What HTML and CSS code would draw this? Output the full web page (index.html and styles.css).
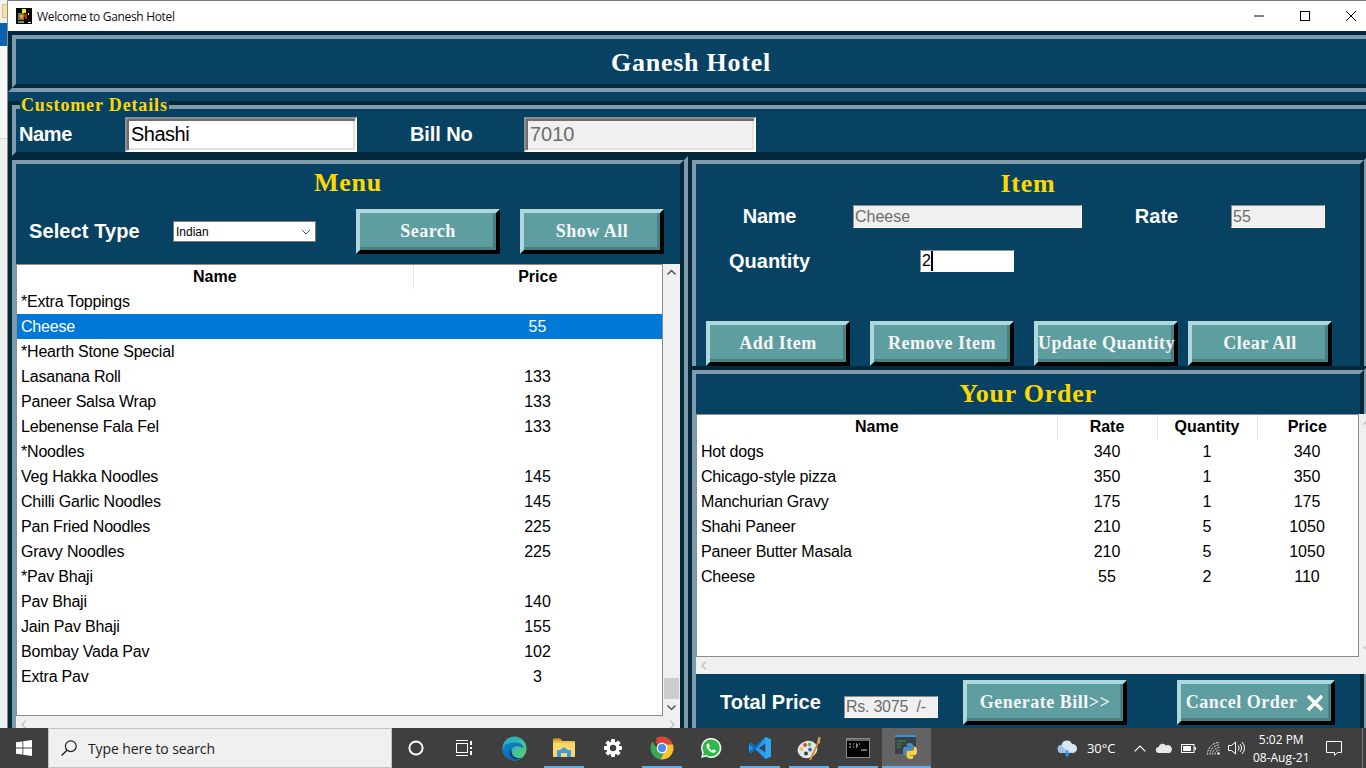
FILE: index.html
```html
<!DOCTYPE html>
<html lang="en">
<head>
  <meta charset="UTF-8">
  <title>Welcome to Ganesh Hotel</title>
  <link rel="stylesheet" href="styles.css">
</head>
<body>
  <div class="screen">
    <div class="desk">
      <div class="behind">
        <div class="behind-top"><span class="behind-tab"></span></div>
        <div class="behind-blue"></div>
        <div class="behind-mid"></div>
        <div class="behind-rest"></div>
      </div>

      <div class="window">
        <div class="titlebar">
          <svg class="app-icon" width="16" height="16" viewBox="0 0 16 16">
            <rect width="16" height="16" fill="#000"/>
            <rect x="6" y="1" width="4" height="4" fill="#ffe61a"/>
            <rect x="2" y="5" width="6" height="7" fill="#7d7a2a"/>
            <rect x="4" y="7" width="3" height="3" fill="#c9b63a"/>
            <rect x="8" y="6" width="3" height="3" fill="#d11a1a"/>
            <rect x="12" y="5" width="1" height="2" fill="#e8e8e8"/>
            <rect x="9" y="9" width="2" height="2" fill="#d11a1a"/>
            <rect x="2" y="13" width="6" height="2" fill="#8a8a50"/>
            <rect x="12" y="14" width="3" height="1" fill="#e8e8e8"/>
          </svg>
          <span class="title-text">Welcome to Ganesh Hotel</span>
          <div class="win-controls">
            <svg width="46" height="30" viewBox="0 0 46 30"><path d="M18 15h10" stroke="#000" fill="none"/></svg>
            <svg width="46" height="30" viewBox="0 0 46 30"><rect x="18.5" y="10.5" width="9" height="9" stroke="#000" fill="none"/></svg>
            <svg width="46" height="30" viewBox="0 0 46 30"><path d="M18 10l10 10M28 10l-10 10" stroke="#000" fill="none"/></svg>
          </div>
        </div>

        <div class="app">
          <header class="frame frame-head">
            <div class="frame-in">
              <h1 class="app-title">Ganesh Hotel</h1>
            </div>
          </header>

          <section class="frame frame-customer">
            <span class="legend">Customer Details</span>
            <div class="frame-in customer-row">
              <label class="label name-label">Name</label>
              <input class="entry-big name-entry" type="text" value="Shashi">
              <label class="label bill-label">Bill No</label>
              <input class="entry-big entry-off" type="text" value="7010" disabled>
            </div>
          </section>

          <div class="columns">
            <section class="frame frame-menu">
              <div class="frame-in">
                <h2 class="panel-title">Menu</h2>
                <div class="menu-tools">
                  <label class="label type-label">Select Type</label>
                  <div class="select-box"><span>Indian</span>
                    <svg width="10" height="6" viewBox="0 0 10 6"><path d="M1 1l4 4 4-4" stroke="#555" fill="none"/></svg>
                  </div>
                  <button class="btn search-btn">Search</button>
                  <button class="btn">Show All</button>
                </div>

                <div class="tree-wrap">
                  <div class="tree menu-tree">
                    <table>
                      <colgroup><col class="c-item"><col class="c-price"></colgroup>
                      <tr><th>Name</th><th>Price</th></tr>
                      <tr><td>*Extra Toppings</td><td></td></tr>
                      <tr class="selected"><td>Cheese</td><td>55</td></tr>
                      <tr><td>*Hearth Stone Special</td><td></td></tr>
                      <tr><td>Lasanana Roll</td><td>133</td></tr>
                      <tr><td>Paneer Salsa Wrap</td><td>133</td></tr>
                      <tr><td>Lebenense Fala Fel</td><td>133</td></tr>
                      <tr><td>*Noodles</td><td></td></tr>
                      <tr><td>Veg Hakka Noodles</td><td>145</td></tr>
                      <tr><td>Chilli Garlic Noodles</td><td>145</td></tr>
                      <tr><td>Pan Fried Noodles</td><td>225</td></tr>
                      <tr><td>Gravy Noodles</td><td>225</td></tr>
                      <tr><td>*Pav Bhaji</td><td></td></tr>
                      <tr><td>Pav Bhaji</td><td>140</td></tr>
                      <tr><td>Jain Pav Bhaji</td><td>155</td></tr>
                      <tr><td>Bombay Vada Pav</td><td>102</td></tr>
                      <tr><td>Extra Pav</td><td>3</td></tr>
                    </table>
                  </div>
                  <div class="vbar">
                    <svg width="17" height="17" viewBox="0 0 17 17"><path d="M4.5 10.5l4-4 4 4" stroke="#555" stroke-width="1.5" fill="none"/></svg>
                    <div class="vbar-track"><span class="vbar-thumb"></span></div>
                    <svg width="17" height="17" viewBox="0 0 17 17"><path d="M4.5 6.5l4 4 4-4" stroke="#555" stroke-width="1.5" fill="none"/></svg>
                  </div>
                </div>
                <div class="hbar">
                  <svg width="17" height="17" viewBox="0 0 17 17"><path d="M10 4.5l-4 4 4 4" stroke="#c4c4c4" stroke-width="1.5" fill="none"/></svg>
                  <svg width="17" height="17" viewBox="0 0 17 17"><path d="M7 4.5l4 4-4 4" stroke="#c4c4c4" stroke-width="1.5" fill="none"/></svg>
                </div>
              </div>
            </section>

            <div class="right-col">
              <section class="frame frame-item">
                <div class="frame-in">
                  <h2 class="panel-title item-title">Item</h2>
                  <div class="item-form">
                    <label class="label form-label tight">Name</label>
                    <input class="entry entry-off" type="text" value="Cheese" disabled>
                    <label class="label rate-label">Rate</label>
                    <input class="entry entry-off" type="text" value="55" disabled>
                    <label class="label form-label">Quantity</label>
                    <div class="entry qty-entry"><span class="caret">2</span></div>
                  </div>
                  <div class="item-buttons">
                    <button class="btn">Add Item</button>
                    <button class="btn">Remove Item</button>
                    <button class="btn">Update Quantity</button>
                    <button class="btn clear-btn">Clear All</button>
                  </div>
                </div>
              </section>

              <section class="frame frame-order">
                <div class="frame-in">
                  <h2 class="panel-title order-title">Your Order</h2>
                  <div class="tree-wrap order-wrap">
                    <div class="tree order-tree">
                      <table>
                        <colgroup><col class="c-oname"><col class="c-onum"><col class="c-onum"><col class="c-onum"></colgroup>
                        <tr><th>Name</th><th>Rate</th><th>Quantity</th><th>Price</th></tr>
                        <tr><td>Hot dogs</td><td>340</td><td>1</td><td>340</td></tr>
                        <tr><td>Chicago-style pizza</td><td>350</td><td>1</td><td>350</td></tr>
                        <tr><td>Manchurian Gravy</td><td>175</td><td>1</td><td>175</td></tr>
                        <tr><td>Shahi Paneer</td><td>210</td><td>5</td><td>1050</td></tr>
                        <tr><td>Paneer Butter Masala</td><td>210</td><td>5</td><td>1050</td></tr>
                        <tr><td>Cheese</td><td>55</td><td>2</td><td>110</td></tr>
                      </table>
                    </div>
                    <div class="vbar order-vbar">
                      <svg width="17" height="17" viewBox="0 0 17 17"><path d="M4.5 10.5l4-4 4 4" stroke="#c4c4c4" stroke-width="1.5" fill="none"/></svg>
                      <div class="vbar-track"></div>
                      <svg width="17" height="17" viewBox="0 0 17 17"><path d="M4.5 6.5l4 4 4-4" stroke="#c4c4c4" stroke-width="1.5" fill="none"/></svg>
                    </div>
                  </div>
                  <div class="hbar order-hbar">
                    <svg width="17" height="17" viewBox="0 0 17 17"><path d="M10 4.5l-4 4 4 4" stroke="#c4c4c4" stroke-width="1.5" fill="none"/></svg>
                  </div>
                  <div class="totals">
                    <label class="label total-label">Total Price</label>
                    <input class="entry entry-off total-entry" type="text" value="Rs. 3075  /-" disabled>
                    <button class="btn bill-btn">Generate Bill&gt;&gt;</button>
                    <button class="btn cancel-btn">Cancel Order
                      <svg width="18" height="18" viewBox="0 0 18 18"><path d="M2 2l14 14M16 2L2 16" stroke="#fff" stroke-width="3.4" fill="none"/></svg>
                    </button>
                  </div>
                </div>
              </section>
            </div>
          </div>
        </div>
      </div>
    </div>

    <footer class="taskbar">
      <div class="start">
        <svg width="16" height="16" viewBox="0 0 16 16" fill="#fff">
          <path d="M0 2.3l6.5-.9v6.2H0zM7.3 1.3L16 0v7.6H7.3zM0 8.4h6.5v6.2L0 13.7zM7.3 8.4H16V16l-8.7-1.2z"/>
        </svg>
      </div>
      <div class="search">
        <svg width="18" height="18" viewBox="0 0 18 18"><circle cx="10.8" cy="7.2" r="5.4" fill="none" stroke="#222" stroke-width="1.2"/><path d="M7 11.2L1.6 16.6" stroke="#222" stroke-width="1.4"/></svg>
        <span>Type here to search</span>
      </div>

      <div class="task-icon">
        <svg class="cortana" width="18" height="18" viewBox="0 0 18 18"><circle cx="9" cy="9" r="6.6" fill="none" stroke="#fff" stroke-width="2"/></svg>
      </div>
      <div class="task-icon">
        <svg class="task-view" width="18" height="16" viewBox="0 0 18 16" fill="none" stroke="#fff"><path d="M1 .5h12M1 15.5h12"/><rect x="1.5" y="3.5" width="11" height="9"/><path d="M16 1v4M16 7v2M16 11v4" stroke-width="2"/></svg>
      </div>
      <div class="task-icon">
        <svg width="25" height="25" viewBox="0 0 25 25">
          <defs>
            <linearGradient id="edgeA" x1="0" y1="0" x2="1" y2="1"><stop offset="0" stop-color="#1aa6d8"/><stop offset="1" stop-color="#5fd36a"/></linearGradient>
            <linearGradient id="edgeB" x1="0" y1="0" x2="1" y2="1"><stop offset="0" stop-color="#0f8fd0"/><stop offset="1" stop-color="#0b4ea0"/></linearGradient>
          </defs>
          <circle cx="12.5" cy="12.5" r="12" fill="url(#edgeA)"/>
          <path d="M.5 12.5C.5 19 6 24.5 12.5 24.5c3 0 5.500-1 7.500-2.700-5 1.500-10-1-10.500-5.800-.3-3 2-5.500 5-5.800 3-.2 5.500.7 7 2.300 0-3-3-6-8-6C7 6.500 1.500 8 .5 12.500z" fill="url(#edgeB)"/>
          <path d="M9.500 16c.5 4.800 5.500 7.300 10.500 5.800-3 1.800-7 1.800-9.500.2C8 20.500 7 17 8.500 13.500c.3 1 .8 1.500 1 2.500z" fill="#0a3d85"/>
        </svg>
      </div>
      <div class="task-icon open">
        <svg width="22" height="20" viewBox="0 0 22 20">
          <path d="M0 2a1 1 0 011-1h6l2 2h12a1 1 0 011 1v14a1 1 0 01-1 1H1a1 1 0 01-1-1z" fill="#f0c04a"/>
          <path d="M0 1.500a1 1 0 011-1h6l2 2.500H0z" fill="#d9a02c"/>
          <path d="M0 5h22v13a1 1 0 01-1 1H1a1 1 0 01-1-1z" fill="#fbd86a"/>
          <path d="M4 19v-7h3l4-3 4 3h3v7h-4v-4H8v4z" fill="#3f9be0"/>
        </svg>
      </div>
      <div class="task-icon">
        <svg width="20" height="20" viewBox="0 0 20 20">
          <g fill="#fff">
            <rect x="8" y="1" width="4" height="18" rx="1"/>
            <rect x="8" y="1" width="4" height="18" rx="1" transform="rotate(45 10 10)"/>
            <rect x="8" y="1" width="4" height="18" rx="1" transform="rotate(90 10 10)"/>
            <rect x="8" y="1" width="4" height="18" rx="1" transform="rotate(135 10 10)"/>
            <circle cx="10" cy="10" r="6.600"/>
          </g>
          <circle cx="10" cy="10" r="3.200" fill="#3f3f3f"/>
        </svg>
      </div>
      <div class="task-icon open">
        <svg width="24" height="24" viewBox="0 0 24 24">
          <path d="M12 12L5.070 6A11.500 11.500 0 0 1 22.960 8.500H12z" fill="#e0453a"/>
          <path d="M12 .5A11.500 11.500 0 0 1 22.960 8.500L12 8.500 5.500 2.500A11.500 11.500 0 0 1 12 .5z" fill="#e0453a"/>
          <path d="M2.500 5.500A11.500 11.500 0 0 0 10.500 23.400L15 15H8.500z" fill="#3aa757"/>
          <path d="M22.960 8.500A11.500 11.500 0 0 1 10.500 23.400L16 12l-3-3.500z" fill="#fbc02d"/>
          <circle cx="12" cy="12" r="5.400" fill="#fff"/>
          <circle cx="12" cy="12" r="4.200" fill="#4c8bf5"/>
        </svg>
      </div>
      <div class="task-icon">
        <svg width="22" height="22" viewBox="0 0 22 22">
          <path d="M11 1a10 10 0 00-8.600 15L1 21l5.200-1.400A10 10 0 1011 1z" fill="#fff"/>
          <path d="M11 2.500a8.500 8.500 0 00-7.200 13l-.9 3.400 3.500-.9A8.500 8.500 0 1011 2.500z" fill="#2fb84a"/>
          <path d="M7.800 6.500c-.8.400-1.400 1.500-1.200 2.800.4 2.800 3.500 6 6.700 6.500 1.300.2 2.400-.5 2.700-1.500.1-.4 0-.8-.3-.9l-2-1c-.3-.1-.5 0-.7.200l-.7.900c-1.500-.5-2.800-1.800-3.400-3.200l.7-.8c.2-.2.200-.5.100-.7l-.9-2c-.2-.4-.6-.4-1-.3z" fill="#fff"/>
        </svg>
      </div>
      <div class="task-icon open">
        <svg width="24" height="24" viewBox="0 0 24 24">
          <path d="M17.500 1L7.500 10.500 3 7 1 8.200v7.600L3 17l4.500-3.500 10 9.500L23 20.500v-17z" fill="#1f9cf0"/>
          <path d="M17.500 1L7.500 10.500 3 7 1 8.200l4 3.800-4 3.800L3 17l4.500-3.500L17.500 1z" fill="#0a6fc0"/>
          <path d="M17.500 7.500L11 12l6.500 4.500z" fill="#3f3f3f"/>
          <path d="M17.500 1L23 3.500v17L17.500 23z" fill="#2aa7f5"/>
        </svg>
      </div>
      <div class="task-icon open">
        <svg width="24" height="26" viewBox="0 0 24 26">
          <ellipse cx="10.500" cy="14.500" rx="10" ry="8.500" fill="#dfe8ee" transform="rotate(-18 10.500 14.500)"/>
          <circle cx="8" cy="10" r="1.900" fill="#e0453a"/>
          <circle cx="12.500" cy="9.500" r="1.900" fill="#7bb93f"/>
          <circle cx="4.500" cy="14" r="1.900" fill="#f0c040"/>
          <circle cx="13" cy="14.500" r="1.900" fill="#3f6fb5"/>
          <circle cx="9" cy="18.500" r="1.900" fill="#3a3a3a"/>
          <path d="M12 25L21 6l1.600.8L14 25.500z" fill="#e08a2a"/>
          <path d="M20 7.500l1.500-6 2 1-.6 6z" fill="#d9a35a"/>
        </svg>
      </div>
      <div class="task-icon open">
        <svg width="24" height="20" viewBox="0 0 24 20">
          <rect x=".5" y=".5" width="23" height="19" fill="#000" stroke="#8a8a8a"/>
          <path d="M1 1h22v2H1z" fill="#6a6a6a"/>
          <path d="M3 6h2M3 9h2M7 6h1M7 9h1M10 6h1v3h-1M13 6h1" stroke="#ddd"/>
          <path d="M15 12h6" stroke="#ddd"/>
        </svg>
      </div>
      <div class="task-icon active">
        <svg width="24" height="26" viewBox="0 0 24 26">
          <rect x="0" y="1" width="21" height="18" fill="#3b4048"/>
          <rect x="0" y="0" width="21" height="2" fill="#2f9bdf"/>
          <path d="M2 6h9M2 9h5M2 12h4" stroke="#3c7a4a" stroke-width="1.500"/>
          <g transform="translate(7 8)">
            <path id="snake" d="M8 0C4.500 0 4.800 1.500 4.800 1.500V3.200H8.100V3.700H3.300S1 3.400 1 7.900s2 4.400 2 4.400h1.200v-2.100s-.1-2 2-2h3.400s1.900 0 1.900-1.800V3S11 0 8 0z" fill="#4b8bbe"/>
            <path d="M8 0C4.500 0 4.800 1.500 4.800 1.500V3.200H8.100V3.700H3.300S1 3.400 1 7.900s2 4.400 2 4.400h1.200v-2.100s-.1-2 2-2h3.400s1.900 0 1.900-1.800V3S11 0 8 0z" fill="#f7d04a" transform="rotate(180 8 8)"/>
          </g>
        </svg>
      </div>

      <div class="tray">
        <svg class="tray-weather" width="21" height="18" viewBox="0 0 21 18">
          <path d="M5 14a4 4 0 01-.5-8A5.500 5.500 0 0115 5a4.500 4.500 0 011 9z" fill="#d9e6f2"/>
          <path d="M5 14a4 4 0 01-.5-8c1 3 6 6 11.500 8z" fill="#9cc4ea"/>
          <path d="M10 11v5M9 15l1.200 2.500L11.500 15z" stroke="#2f8fe0" stroke-width="1.500" fill="#2f8fe0"/>
        </svg>
        <span class="tray-temp">30°C</span>
        <svg class="tray-chevron" width="12" height="7" viewBox="0 0 12 7"><path d="M.7 6.300L6 1l5.300 5.300" stroke="#fff" stroke-width="1.200" fill="none"/></svg>
        <svg class="tray-one" width="16" height="10" viewBox="0 0 16 10"><path d="M3 10a3 3 0 01-.3-6A4 4 0 0110 2.500 3.500 3.500 0 0113.500 10z" fill="#e8e8e8"/></svg>
        <svg class="tray-batt" width="15" height="9" viewBox="0 0 15 9"><rect x=".5" y=".5" width="12.500" height="8" fill="none" stroke="#fff"/><rect x="2" y="2" width="8" height="5" fill="#fff"/><rect x="13.500" y="3" width="1.500" height="3" fill="#fff"/></svg>
        <svg class="tray-wifi" width="13" height="13" viewBox="0 0 13 13" fill="none" stroke="#f0f0f0"><path d="M.5 12.500A12 12 0 0112.500 .5M3 12.500A9.500 9.500 0 0112.500 3M5.500 12.500A7 7 0 0112.500 5.500M8 12.500A4.500 4.500 0 0112.500 8" stroke-dasharray="2 1"/><circle cx="11.500" cy="11.500" r="1.200" fill="#fff" stroke="none"/></svg>
        <svg class="tray-vol" width="17" height="14" viewBox="0 0 17 14" fill="none" stroke="#fff"><path d="M.5 4.500h3L7.500 1v12l-4-3.500h-3z"/><path d="M10 4.500a3.500 3.500 0 010 5M12 3a6 6 0 010 8M14 1a8.500 8.500 0 010 12"/></svg>
        <div class="clock"><span>5:02 PM</span><span>08-Aug-21</span></div>
        <svg class="tray-note" width="16" height="15" viewBox="0 0 16 15"><path d="M.5 .5h15v11h-4l-3 2.800v-2.800h-8z" fill="none" stroke="#fff"/></svg>
        <span class="show-desk"></span>
      </div>
    </footer>
  </div>
</body>
</html>
```

FILE: styles.css
```css
* {
  box-sizing: border-box;
}
html, body {
  margin: 0;
  padding: 0;
  overflow: hidden;
}
body {
  font-family: "Liberation Sans", Arial, sans-serif;
  background: #3f3f3f;
}
.screen {
  width: 1366px;
  height: 768px;
  overflow: hidden;
}
.desk {
  display: flex;
  height: 728px;
}

/* whatever sits behind the window */
.behind {
  width: 8px;
  flex: none;
  border-right: 1px solid #8c8c8c;
  display: flex;
  flex-direction: column;
}
.behind-top {
  height: 23px;
  padding: 4px 0 5px 2px;
  background: #f1f1f1;
}
.behind-tab {
  display: block;
  height: 14px;
  background: #f4e3a8;
  border: 1px solid #dcc27a;
  border-right: 0;
}
.behind-blue {
  height: 23px;
  background: #0a63ad;
}
.behind-mid {
  height: 93px;
  background: #f7f7f7;
  border-bottom: 1px solid #d4d4d4;
}
.behind-rest {
  flex: 1;
  background: #f0f0f0;
}

.window {
  width: 1358px;
  flex: none;
  overflow: hidden;
}
.titlebar {
  height: 31px;
  background: #fff;
  border-top: 1px solid #7a7a7a;
  display: flex;
  align-items: center;
  padding-left: 8px;
}
.app-icon {
  flex: none;
  margin-top: -1px;
}
.title-text {
  margin-left: 5px;
  font-family: "Open Sans", sans-serif;
  font-size: 12px;
  letter-spacing: -.33px;
  color: #111;
}
.win-controls {
  margin-left: auto;
  display: flex;
  margin-right: -8px;
}
.win-controls svg {
  display: block;
}

.app {
  width: 1358px;
  height: 697px;
  background: #074262;
}

/* tk style groove: two nested 4px borders */
.frame {
  border: 4px solid;
  border-color: #03283c #7f9bab #7f9bab #03283c;
  background: #074262;
}
.frame-in {
  border: 4px solid;
  border-color: #7f9bab #03283c #03283c #7f9bab;
}
.frame-head {
  width: 1370px;
  margin-bottom: 9px;
}
.frame-head .frame-in {
  height: 53px;
}
.app-title {
  margin: 0;
  padding-top: 1px;
  text-align: center;
  color: #fff;
  font: bold 26px/45px "Liberation Serif", "Times New Roman", serif;
  letter-spacing: .75px;
  width: 1350px;
}

.frame-customer {
  position: relative;
  width: 1370px;
  border-bottom: 0;
}
.legend {
  position: absolute;
  left: 8px;
  top: -10px;
  padding: 0 1px;
  background: #074262;
  color: #ffd700;
  font: bold 18px/20px "Liberation Serif", serif;
  letter-spacing: .85px;
}
.customer-row {
  display: flex;
  align-items: flex-start;
  height: 51px;
  padding-top: 8px;
  overflow: hidden;
}
.label {
  color: #fff;
  font-weight: bold;
  font-size: 20px;
  line-height: 23px;
}
.tight {
  letter-spacing: -.3px;
}
.name-label {
  width: 106px;
  margin-left: 3px;
  margin-top: 6px;
  letter-spacing: -.4px;
}
.bill-label {
  width: 114px;
  margin-left: 53px;
  margin-top: 6px;
  letter-spacing: -.1px;
}
.entry-big {
  width: 232px;
  height: 35px;
  padding: 0 0 0 4px;
  font-family: "Liberation Sans", Arial, sans-serif;
  font-size: 20px;
  color: #000;
  background: #fff;
  border: 2px solid;
  border-color: #8e8e8e #fff #fff #8e8e8e;
  box-shadow: inset 2px 2px #6e6e6e, inset -2px -2px #e2e2e2;
  outline: 0;
}
.name-entry {
  letter-spacing: -.5px;
}
.entry-big.entry-off {
  background: #f0f0f0;
  color: #6d6d6d;
}

.columns {
  display: grid;
  grid-template-columns: 680px 680px;
}

/* menu panel */
.frame-menu {
  height: 580px;
}
.frame-menu .frame-in {
  height: 572px;
}
.panel-title {
  margin: 0;
  padding-top: 1px;
  height: 36px;
  text-align: center;
  color: #ffd700;
  font: bold 26px/36px "Liberation Serif", "Times New Roman", serif;
  letter-spacing: .75px;
}
.menu-tools {
  display: flex;
  align-items: center;
  height: 64px;
  padding: 9px 0 10px 13px;
}
.type-label {
  width: 144px;
  flex: none;
  letter-spacing: .1px;
}
.select-box {
  width: 143px;
  height: 21px;
  flex: none;
  padding: 0 4px 0 2px;
  background: #fff;
  border: 1px solid #7a7a7a;
  display: flex;
  align-items: center;
  justify-content: space-between;
  font-size: 12px;
  color: #000;
}
.search-btn {
  margin-left: 40px;
  margin-right: 20px;
}
.btn {
  width: 144px;
  height: 45px;
  flex: none;
  padding: 0;
  color: #f6f6f6;
  background: #5f9ea0;
  font: bold 18px "Liberation Serif", "Times New Roman", serif;
  letter-spacing: .5px;
  white-space: nowrap;
  border: 4px solid;
  border-color: #afd8da #000 #000 #afd8da;
  box-shadow: inset -3px -3px #4c7f80;
  cursor: pointer;
}

.tree-wrap {
  display: flex;
  height: 452px;
}
.tree {
  width: 647px;
  flex: none;
  background: #fff;
  border: 1px solid #8c8c8c;
  border-right-width: 1px;
}
.tree table {
  width: 100%;
  table-layout: fixed;
  border-collapse: collapse;
}
.c-item {
  width: 396px;
}
.tree th, .tree td {
  height: 25px;
  padding: 0;
  text-align: center;
  font-size: 16px;
  color: #000;
  white-space: pre;
}
.tree th {
  height: 24px;
  font-weight: bold;
  border-left: 1px solid #e6e6e6;
}
.tree th:first-child {
  border-left: 0;
}
.tree td:first-child {
  text-align: left;
  padding-left: 4px;
  letter-spacing: -.2px;
}
.tree .selected td {
  background: #0078d7;
  color: #fff;
}
.vbar {
  width: 17px;
  flex: none;
  background: #f0f0f0;
  display: flex;
  flex-direction: column;
}
.vbar svg {
  display: block;
  flex: none;
}
.vbar-track {
  flex: 1;
  position: relative;
}
.vbar-thumb {
  position: absolute;
  left: 1px;
  right: 1px;
  bottom: 0;
  height: 21px;
  background: #cdcdcd;
}
.hbar {
  height: 17px;
  width: 664px;
  background: #f0f0f0;
  display: flex;
  justify-content: space-between;
}
.hbar svg {
  display: block;
  flex: none;
}

/* right side */
.frame-item {
  width: 680px;
  height: 210px;
  border-bottom: 0;
}
.frame-item .frame-in {
  height: 206px;
  border-bottom: 0;
  overflow: hidden;
}
.item-title {
  line-height: 38px;
  height: 41px;
}
.item-form {
  display: grid;
  grid-template-columns: 124px 229px 149px 94px;
  grid-template-rows: 23px 22px;
  row-gap: 22px;
  padding-left: 33px;
  align-items: center;
}
.form-label {
  text-align: center;
  padding-right: 43px;
}
.rate-label {
  text-align: center;
}
.entry {
  height: 100%;
  width: 100%;
  padding: 0 0 0 1px;
  font-family: "Liberation Sans", Arial, sans-serif;
  font-size: 16px;
  color: #000;
  background: #fff;
  border: 1px solid;
  border-color: #8e8e8e #fff #fff #8e8e8e;
  outline: 0;
}
.entry-off {
  background: #f0f0f0;
  color: #6d6d6d;
}
.qty-entry {
  width: 94px;
  margin-left: 67px;
  line-height: 20px;
}
.caret {
  display: inline-block;
  height: 20px;
  border-right: 2px solid #000;
}
.item-buttons {
  display: flex;
  gap: 20px;
  margin-top: 49px;
  padding-left: 10px;
}
.item-buttons .clear-btn {
  margin-left: -10px;
}

.frame-order {
  width: 680px;
  height: 370px;
}
.frame-order .frame-in {
  height: 362px;
}
.order-title {
  line-height: 38px;
  height: 40px;
}
.order-wrap {
  width: 680px;
  height: 243px;
}
.order-tree {
  width: 663px;
}
.tree.order-tree table {
  width: 660px;
}
.c-oname {
  width: 360px;
}
.c-onum {
  width: 100px;
}
.order-hbar {
  width: 680px;
}
.totals {
  display: flex;
  align-items: flex-start;
  padding: 6px 0 0 24px;
}
.total-label {
  width: 124px;
  flex: none;
  margin-top: 11px;
}
.total-entry {
  width: 94px;
  height: 22px;
  flex: none;
  margin-top: 16px;
  letter-spacing: -.25px;
}
.bill-btn {
  width: 164px;
  margin-left: 25px;
}
.cancel-btn {
  width: 158px;
  margin-left: 50px;
  padding-right: 2px;
  display: flex;
  align-items: center;
  justify-content: center;
  gap: 9px;
}

/* windows taskbar */
.taskbar {
  height: 40px;
  background: #3f3f3f;
  display: flex;
  align-items: stretch;
}
.start {
  width: 48px;
  flex: none;
  display: flex;
  align-items: center;
  justify-content: center;
}
.search {
  width: 344px;
  flex: none;
  background: #f0f0f0;
  border: 1px solid #c4c4c4;
  display: flex;
  align-items: center;
  padding-left: 11px;
  font-family: "Open Sans", sans-serif;
  font-size: 14px;
  letter-spacing: -.1px;
  color: #222;
}
.search span {
  margin-left: 10px;
}
.task-icon {
  width: 49px;
  flex: none;
  display: flex;
  align-items: center;
  justify-content: center;
  position: relative;
}
.cortana {
  margin-left: -1px;
}
.task-view {
  margin-left: -3px;
}
.task-icon.open::after,
.task-icon.active::after {
  content: "";
  position: absolute;
  left: 5px;
  right: 4px;
  bottom: 0;
  height: 2px;
  background: #63acea;
}
.task-icon.active {
  background: #636363;
}
.task-icon.active::after {
  left: 0;
  right: 0;
}
.tray {
  flex: 1;
  display: flex;
  align-items: center;
  color: #fff;
  font-family: "Open Sans", sans-serif;
  font-size: 13px;
  padding-left: 126px;
}
.tray svg {
  display: block;
  flex: none;
}
.tray-temp {
  margin-left: 9px;
  letter-spacing: -.1px;
}
.tray-chevron {
  margin-left: 19px;
}
.tray-one {
  margin-left: 10px;
}
.tray-batt {
  margin-left: 9px;
}
.tray-wifi {
  margin-left: 11px;
}
.tray-vol {
  margin-left: 8px;
}
.clock {
  width: 78px;
  margin-left: -3px;
  padding-top: 2px;
  display: flex;
  flex-direction: column;
  align-items: center;
  font-size: 12px;
  line-height: 18px;
}
.tray-note {
  margin-left: 6px;
}
.show-desk {
  width: 1px;
  height: 40px;
  margin-left: 20px;
  background: #7a7a7a;
}
```
